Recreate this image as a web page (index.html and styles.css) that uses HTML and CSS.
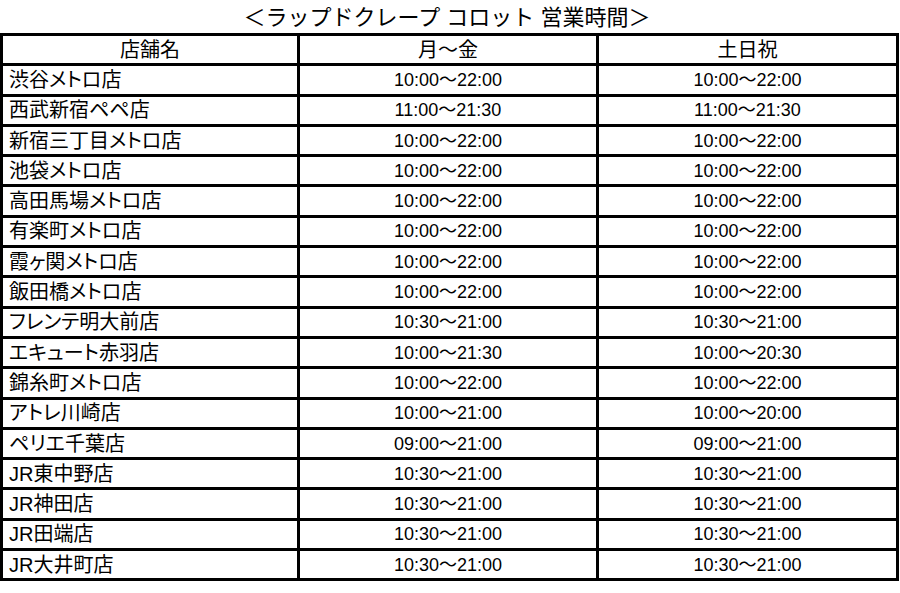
FILE: index.html
```html
<!DOCTYPE html>
<html lang="ja">
<head>
<meta charset="utf-8">
<title>ラップドクレープ コロット 営業時間</title>
<link rel="stylesheet" href="styles.css">
</head>
<body>
<div class="page">
  <h1 class="title">＜ラップドクレープ コロット 営業時間＞</h1>
  <table class="hours">
    <colgroup>
      <col class="c-name">
      <col class="c-week">
      <col class="c-hol">
    </colgroup>
    <thead>
      <tr><th>店舗名</th><th>月～金</th><th>土日祝</th></tr>
    </thead>
    <tbody>
      <tr><td class="name">渋谷メトロ店</td><td class="time">10:00～22:00</td><td class="time">10:00～22:00</td></tr>
      <tr><td class="name">西武新宿ペペ店</td><td class="time">11:00～21:30</td><td class="time">11:00～21:30</td></tr>
      <tr><td class="name">新宿三丁目メトロ店</td><td class="time">10:00～22:00</td><td class="time">10:00～22:00</td></tr>
      <tr><td class="name">池袋メトロ店</td><td class="time">10:00～22:00</td><td class="time">10:00～22:00</td></tr>
      <tr><td class="name">高田馬場メトロ店</td><td class="time">10:00～22:00</td><td class="time">10:00～22:00</td></tr>
      <tr><td class="name">有楽町メトロ店</td><td class="time">10:00～22:00</td><td class="time">10:00～22:00</td></tr>
      <tr><td class="name">霞ヶ関メトロ店</td><td class="time">10:00～22:00</td><td class="time">10:00～22:00</td></tr>
      <tr><td class="name">飯田橋メトロ店</td><td class="time">10:00～22:00</td><td class="time">10:00～22:00</td></tr>
      <tr><td class="name">フレンテ明大前店</td><td class="time">10:30～21:00</td><td class="time">10:30～21:00</td></tr>
      <tr><td class="name">エキュート赤羽店</td><td class="time">10:00～21:30</td><td class="time">10:00～20:30</td></tr>
      <tr><td class="name">錦糸町メトロ店</td><td class="time">10:00～22:00</td><td class="time">10:00～22:00</td></tr>
      <tr><td class="name">アトレ川崎店</td><td class="time">10:00～21:00</td><td class="time">10:00～20:00</td></tr>
      <tr><td class="name">ペリエ千葉店</td><td class="time">09:00～21:00</td><td class="time">09:00～21:00</td></tr>
      <tr><td class="name">JR東中野店</td><td class="time">10:30～21:00</td><td class="time">10:30～21:00</td></tr>
      <tr><td class="name">JR神田店</td><td class="time">10:30～21:00</td><td class="time">10:30～21:00</td></tr>
      <tr><td class="name">JR田端店</td><td class="time">10:30～21:00</td><td class="time">10:30～21:00</td></tr>
      <tr><td class="name">JR大井町店</td><td class="time">10:30～21:00</td><td class="time">10:30～21:00</td></tr>
    </tbody>
  </table>
</div>
</body>
</html>
```

FILE: styles.css
```css
html, body {
  margin: 0;
  padding: 0;
  background: #fff;
}

body {
  font-family: "Liberation Sans", "Noto Sans CJK JP", sans-serif;
  color: #000;
}

.page {
  width: 900px;
}

.title {
  margin: 0;
  height: 33px;
  font-size: 22px;
  font-weight: normal;
  line-height: 36px;
  text-align: center;
  padding-right: 6px;
  box-sizing: border-box;
}

.hours {
  border-collapse: collapse;
  table-layout: fixed;
  width: 899px;
}

.c-name { width: 297px; }
.c-week { width: 299px; }
.c-hol  { width: 300px; }

.hours tr {
  height: 30.3px;
}

.hours th,
.hours td {
  border: 3px solid #000;
  padding: 0;
  line-height: 24px;
  vertical-align: middle;
  font-weight: normal;
  font-feature-settings: "palt";
}

.hours th {
  font-size: 20px;
  text-align: center;
}

.hours td.name {
  font-size: 20px;
  text-align: left;
  padding-left: 6px;
}

.hours td.time {
  font-size: 18px;
  text-align: center;
}
```
